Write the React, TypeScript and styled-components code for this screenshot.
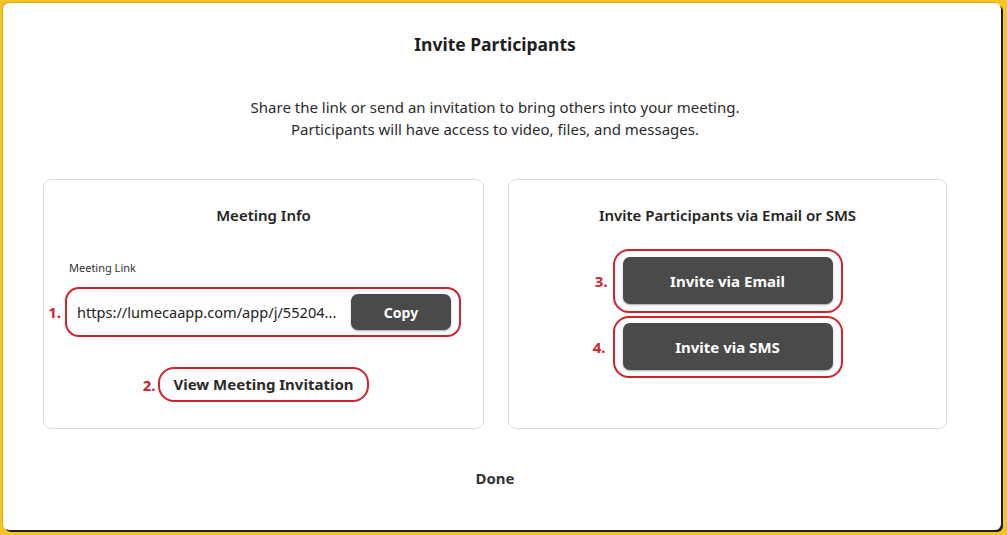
import React from 'react'
import styled, { createGlobalStyle } from 'styled-components'

const FONT = `'Noto Sans', 'Open Sans', sans-serif`
const RED = '#d0222a'
const DARK = '#4a4a4a'

const GlobalStyle = createGlobalStyle`
  html, body {
    margin: 0;
    padding: 0;
    background: #f6c423;
  }
  body {
    font-family: ${FONT};
    color: #222;
  }
`

const Frame = styled.div`
  width: 1007px;
  height: 535px;
  padding: 3px 6px 5px 3px;
  box-sizing: border-box;
`

const Dialog = styled.div`
  height: 100%;
  background: #fff;
  border-radius: 6px;
  box-shadow: 2px 2px 0 #1d1d1d, -1px -1px 0 rgba(0, 0, 0, 0.12);
  padding: 29px 0 0 40px;
  box-sizing: border-box;
  display: flex;
  flex-direction: column;
`

const Content = styled.div`
  width: 904px;
  display: flex;
  flex-direction: column;
  align-items: center;
`

const Title = styled.h2`
  margin: 0;
  font-size: 17.5px;
  line-height: 24px;
  font-weight: 700;
  color: #1e1e1e;
`

const Intro = styled.p`
  margin: 40px 0 0;
  font-size: 15px;
  line-height: 22px;
  text-align: center;
  color: #2a2a2a;
`

const Cards = styled.div`
  margin-top: 39px;
  display: grid;
  grid-template-columns: 441px 439px;
  gap: 24px;
`

const Card = styled.section`
  height: 250px;
  box-sizing: border-box;
  border: 1px solid #dcdcdc;
  border-radius: 8px;
  padding: 24px 21px 0;
  display: flex;
  flex-direction: column;
  align-items: center;
`

const CardTitle = styled.h3`
  margin: 0;
  font-size: 15px;
  line-height: 22px;
  font-weight: 600;
  color: #222;
`

const FieldLabel = styled.div`
  align-self: stretch;
  margin: 35px 0 12px 4px;
  font-size: 11px;
  line-height: 14px;
  color: #333;
`

const Highlight = styled.div<{ $radius: number; $pad: string }>`
  position: relative;
  border: 2px solid ${RED};
  border-radius: ${(p) => p.$radius}px;
  padding: ${(p) => p.$pad};
  display: flex;
  align-items: center;
`

const Marker = styled.span<{ $gap: number }>`
  position: absolute;
  right: calc(100% + ${(p) => p.$gap}px);
  top: 50%;
  transform: translateY(-50%);
  color: ${RED};
  font-size: 15px;
  font-weight: 700;
  white-space: nowrap;
`

const LinkField = styled.div`
  align-self: stretch;
  margin-left: 0;
  margin-right: 1px;
`

const LinkText = styled.span`
  flex: 1;
  font-size: 14.6px;
  line-height: 20px;
  color: #222;
  white-space: nowrap;
  margin-right: 8px;
`

const DarkButton = styled.button<{ $w: number; $h: number; $size: number }>`
  flex: none;
  width: ${(p) => p.$w}px;
  height: ${(p) => p.$h}px;
  border: 0;
  border-radius: 7px;
  background: ${DARK};
  color: #fff;
  font-family: ${FONT};
  font-size: ${(p) => p.$size}px;
  font-weight: 700;
  box-shadow: 0 1px 2px rgba(0, 0, 0, 0.35);
  cursor: pointer;
`

const LinkButton = styled.button`
  border: 0;
  background: none;
  padding: 0;
  font-family: ${FONT};
  font-size: 15px;
  line-height: 20px;
  font-weight: 700;
  color: #2a2a2a;
  cursor: pointer;
`

const InvitationSpot = styled.div`
  margin-top: 30px;
`

const ButtonStack = styled.div`
  margin-top: 23px;
  display: flex;
  flex-direction: column;
  gap: 3px;
`

const Done = styled.button`
  margin-top: 37px;
  border: 0;
  background: none;
  font-family: ${FONT};
  font-size: 15px;
  line-height: 22px;
  font-weight: 700;
  color: #333;
  cursor: pointer;
`

export default function App() {
  return (
    <>
      <GlobalStyle />
      <Frame>
        <Dialog>
          <Content>
            <Title>Invite Participants</Title>
            <Intro>
              Share the link or send an invitation to bring others into your meeting.
              <br />
              Participants will have access to video, files, and messages.
            </Intro>
            <Cards>
              <Card>
                <CardTitle>Meeting Info</CardTitle>
                <FieldLabel>Meeting Link</FieldLabel>
                <LinkField>
                  <Highlight $radius={14} $pad="5px 8px 5px 10px">
                    <Marker $gap={6}>1.</Marker>
                    <LinkText>https://lumecaapp.com/app/j/55204...</LinkText>
                    <DarkButton $w={100} $h={36} $size={14}>
                      Copy
                    </DarkButton>
                  </Highlight>
                </LinkField>
                <InvitationSpot>
                  <Highlight $radius={16} $pad="5px 13px 6px">
                    <Marker $gap={5}>2.</Marker>
                    <LinkButton>View Meeting Invitation</LinkButton>
                  </Highlight>
                </InvitationSpot>
              </Card>
              <Card>
                <CardTitle>Invite Participants via Email or SMS</CardTitle>
                <ButtonStack>
                  <Highlight $radius={16} $pad="6px 8px 7px">
                    <Marker $gap={7}>3.</Marker>
                    <DarkButton $w={210} $h={47} $size={15}>
                      Invite via Email
                    </DarkButton>
                  </Highlight>
                  <Highlight $radius={16} $pad="5px 8px 6px">
                    <Marker $gap={9}>4.</Marker>
                    <DarkButton $w={210} $h={47} $size={15}>
                      Invite via SMS
                    </DarkButton>
                  </Highlight>
                </ButtonStack>
              </Card>
            </Cards>
            <Done>Done</Done>
          </Content>
        </Dialog>
      </Frame>
    </>
  )
}
